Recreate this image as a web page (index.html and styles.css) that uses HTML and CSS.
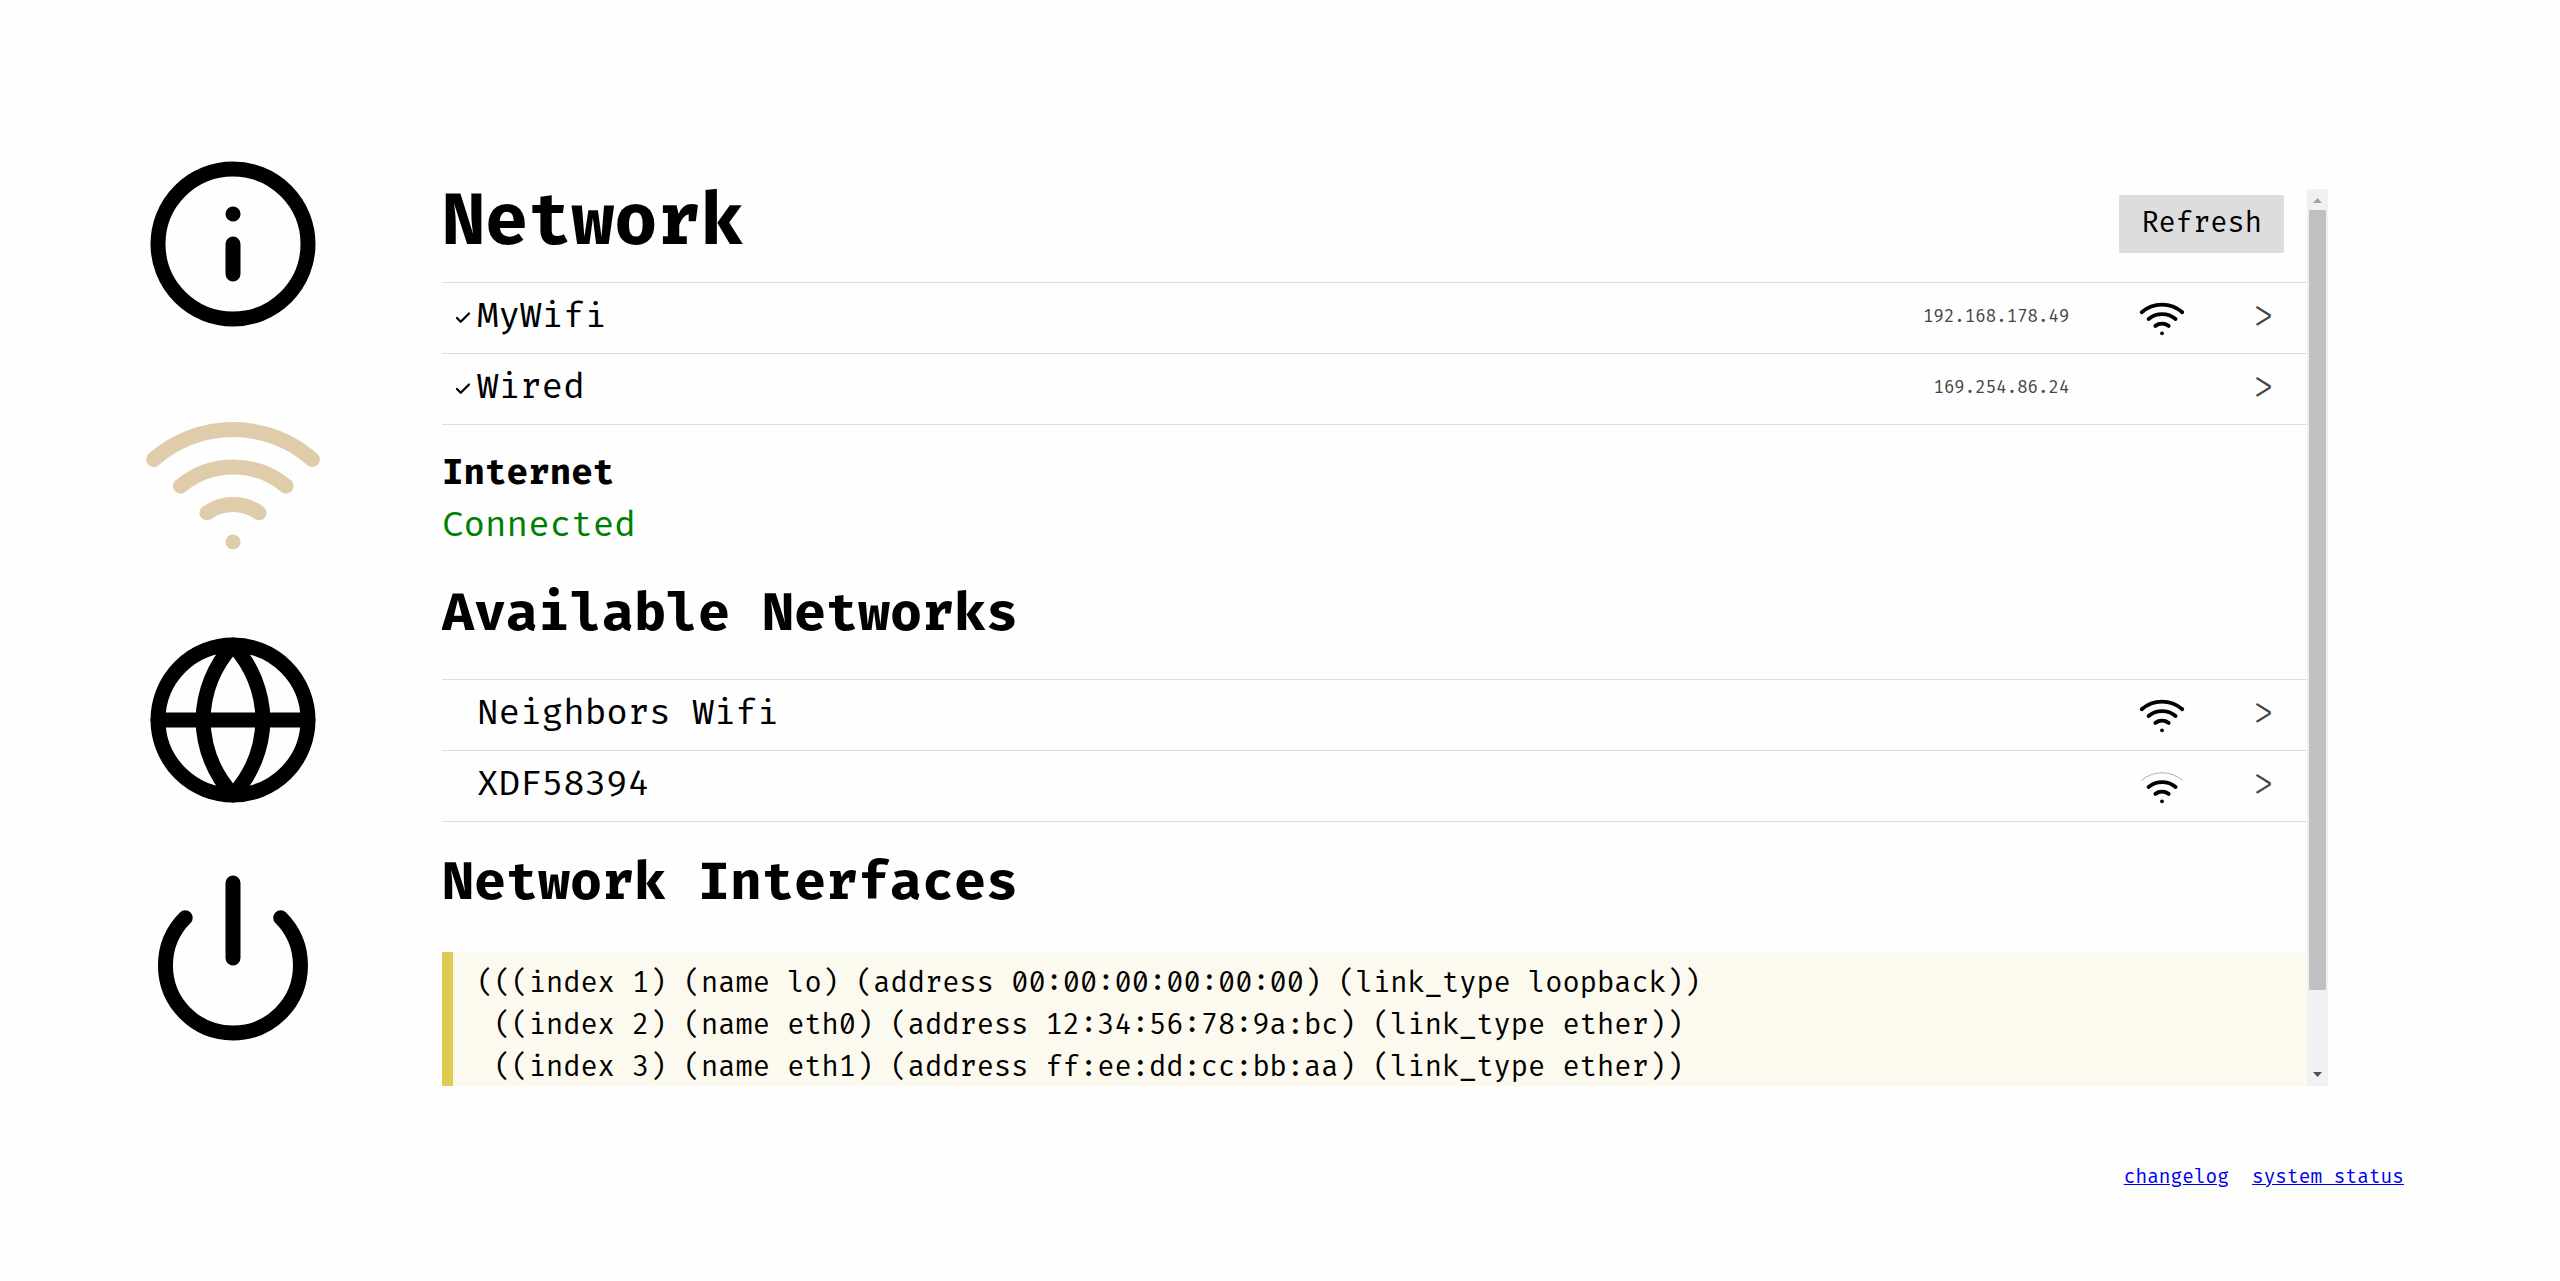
FILE: index.html
```html
<!DOCTYPE html>
<html lang="en">
<head>
<meta charset="utf-8">
<title>Network</title>
<link rel="stylesheet" href="styles.css">
</head>
<body>
<svg class="defs" aria-hidden="true">
  <symbol id="wifi" viewBox="0 0 24 24">
    <path d="M5 12.55a11 11 0 0 1 14.08 0"/>
    <path d="M1.42 9a16 16 0 0 1 21.16 0"/>
    <path d="M8.53 16.11a6 6 0 0 1 6.95 0"/>
    <path d="M12 20h.01"/>
  </symbol>
  <symbol id="wifi-medium" viewBox="0 0 24 24">
    <path d="M5 12.55a11 11 0 0 1 14.08 0"/>
    <path class="faint" d="M1.42 9a16 16 0 0 1 21.16 0"/>
    <path d="M8.53 16.11a6 6 0 0 1 6.95 0"/>
    <path d="M12 20h.01"/>
  </symbol>
  <symbol id="check" viewBox="0 0 24 24">
    <path d="M20 6 9 17l-5-5"/>
  </symbol>
</svg>
<div class="layout">
  <nav class="menu">
    <a href="#info" aria-label="Information"><svg class="icon" viewBox="0 0 24 24"><circle cx="12" cy="12" r="10"/><path d="M12 16v-4M12 8h.01"/></svg></a>
    <a href="#network" class="active" aria-label="Network"><svg class="icon"><use href="#wifi"/></svg></a>
    <a href="#localization" aria-label="Localization"><svg class="icon" viewBox="0 0 24 24"><circle cx="12" cy="12" r="10"/><path d="M2 12h20M12 2a15.3 15.3 0 0 1 4 10 15.3 15.3 0 0 1-4 10 15.3 15.3 0 0 1-4-10 15.3 15.3 0 0 1 4-10z"/></svg></a>
    <a href="#shutdown" aria-label="Shutdown"><svg class="icon" viewBox="0 0 24 24"><path d="M18.36 6.64a9 9 0 1 1-12.73 0M12 2v10"/></svg></a>
  </nav>
  <div class="viewport">
    <main class="content">
      <header class="title-bar">
        <h1>Network</h1>
        <button type="button" class="refresh">Refresh</button>
      </header>
      <ul class="networks">
        <li><a href="#mywifi"><span class="mark"><svg class="icon"><use href="#check"/></svg></span><span class="name">MyWifi</span><span class="address">192.168.178.49</span><span class="signal"><svg class="icon"><use href="#wifi"/></svg></span><span class="chevron">&gt;</span></a></li>
        <li><a href="#wired"><span class="mark"><svg class="icon"><use href="#check"/></svg></span><span class="name">Wired</span><span class="address">169.254.86.24</span><span class="signal"></span><span class="chevron">&gt;</span></a></li>
      </ul>
      <dl class="status">
        <dt>Internet</dt>
        <dd>Connected</dd>
      </dl>
      <h2>Available Networks</h2>
      <ul class="networks">
        <li><a href="#neighbors"><span class="mark"></span><span class="name">Neighbors Wifi</span><span class="signal"><svg class="icon"><use href="#wifi"/></svg></span><span class="chevron">&gt;</span></a></li>
        <li><a href="#xdf58394"><span class="mark"></span><span class="name">XDF58394</span><span class="signal"><svg class="icon"><use href="#wifi-medium"/></svg></span><span class="chevron">&gt;</span></a></li>
      </ul>
      <h2>Network Interfaces</h2>
      <pre class="interfaces">(((index 1) (name lo) (address 00:00:00:00:00:00) (link_type loopback))
 ((index 2) (name eth0) (address 12:34:56:78:9a:bc) (link_type ether))
 ((index 3) (name eth1) (address ff:ee:dd:cc:bb:aa) (link_type ether))</pre>
    </main>
    <div class="scrollbar" aria-hidden="true">
      <svg class="arrow arrow-up" viewBox="0 0 21 21"><path d="M6 14l4.500-5 4.500 5z"/></svg>
      <div class="thumb"></div>
      <svg class="arrow arrow-down" viewBox="0 0 21 21"><path d="M6 7h9l-4.500 5z"/></svg>
    </div>
  </div>
</div>
<footer class="footer">
  <a href="#changelog">changelog</a>
  <a href="#status">system status</a>
</footer>
</body>
</html>
```

FILE: styles.css
```css
* {
  box-sizing: border-box;
}

body {
  margin: 0;
  background: #fefefe;
  color: #000;
  font-family: "Fira Code", "Liberation Mono", monospace;
  font-size: 35px;
  line-height: 52px;
}

.defs {
  display: none;
}

.icon {
  display: block;
  width: 100%;
  height: 100%;
  fill: none;
  stroke: currentColor;
  stroke-width: 2;
  stroke-linecap: round;
  stroke-linejoin: round;
}

.faint {
  stroke: #aaa;
  stroke-width: 0.5;
}

.layout {
  display: flex;
  align-items: flex-start;
  gap: 119px;
  padding: 154px 232px 0 143px;
}

.menu {
  display: flex;
  flex-direction: column;
  gap: 58px;
}

.menu a {
  width: 180px;
  height: 180px;
  color: #000;
}

.menu .active {
  color: #dfccab;
}

/* Scrolling page area with its own scrollbar */
.viewport {
  display: flex;
  flex: 1;
  min-width: 0;
  height: 70vh;
  margin-top: 35px;
}

.content {
  flex: 1;
  min-width: 0;
  overflow-y: auto;
  scrollbar-width: none;
}

.scrollbar {
  display: flex;
  flex-direction: column;
  width: 21px;
  background: #f1f1f1;
}

.arrow {
  height: 21px;
}

.arrow-up {
  fill: #a3a3a3;
}

.arrow-down {
  margin-top: auto;
  fill: #505050;
}

.thumb {
  height: 87%;
  margin: 0 2px;
  background: #c1c1c1;
}

.title-bar {
  display: flex;
  align-items: flex-start;
  justify-content: space-between;
  margin-bottom: 26px;
  padding-right: 23px;
}

h1 {
  margin: 0;
  font-size: 70px;
  line-height: 67px;
}

h2 {
  margin: 29px 0 33px;
  font-size: 52px;
  line-height: 64px;
}

.refresh {
  margin-top: 6px;
  padding: 8px 22px;
  border: 0;
  background: #ddd;
  color: #000;
  font-family: inherit;
  font-size: 28px;
  line-height: 42px;
}

.networks {
  margin: 0;
  padding: 0;
  border-bottom: 1px solid #ddd;
  list-style: none;
}

.networks a {
  display: flex;
  align-items: center;
  height: 71px;
  padding: 0 33px 0 12px;
  border-top: 1px solid #ddd;
  color: inherit;
  text-decoration: none;
}

.mark {
  width: 18px;
  height: 18px;
  margin-right: 5px;
}

.mark .icon {
  stroke-width: 3;
}

.name,
.address,
.chevron {
  padding-bottom: 3px;
}

.name {
  flex: 1;
}

.address {
  color: #444;
  font-size: 17px;
}

.signal {
  width: 46px;
  height: 46px;
  margin: 0 67px 0 70px;
}

.chevron {
  color: #444;
  font-weight: 300;
}

.status {
  margin: 23px 0 30px;
}

.status dt {
  font-weight: bold;
}

.status dd {
  margin: 0;
  color: #008000;
}

.interfaces {
  margin: 37px 0;
  padding: 11px 24px 48px;
  border-left: 11px solid #dfcb52;
  background: #fcfaee;
  font-family: inherit;
  font-size: 28px;
  line-height: 42px;
}

.footer {
  display: flex;
  justify-content: flex-end;
  gap: 23px;
  margin-top: 79px;
  padding: 0 156px;
  font-size: 19px;
  line-height: 24px;
}

.footer a {
  color: #00e;
}
```
